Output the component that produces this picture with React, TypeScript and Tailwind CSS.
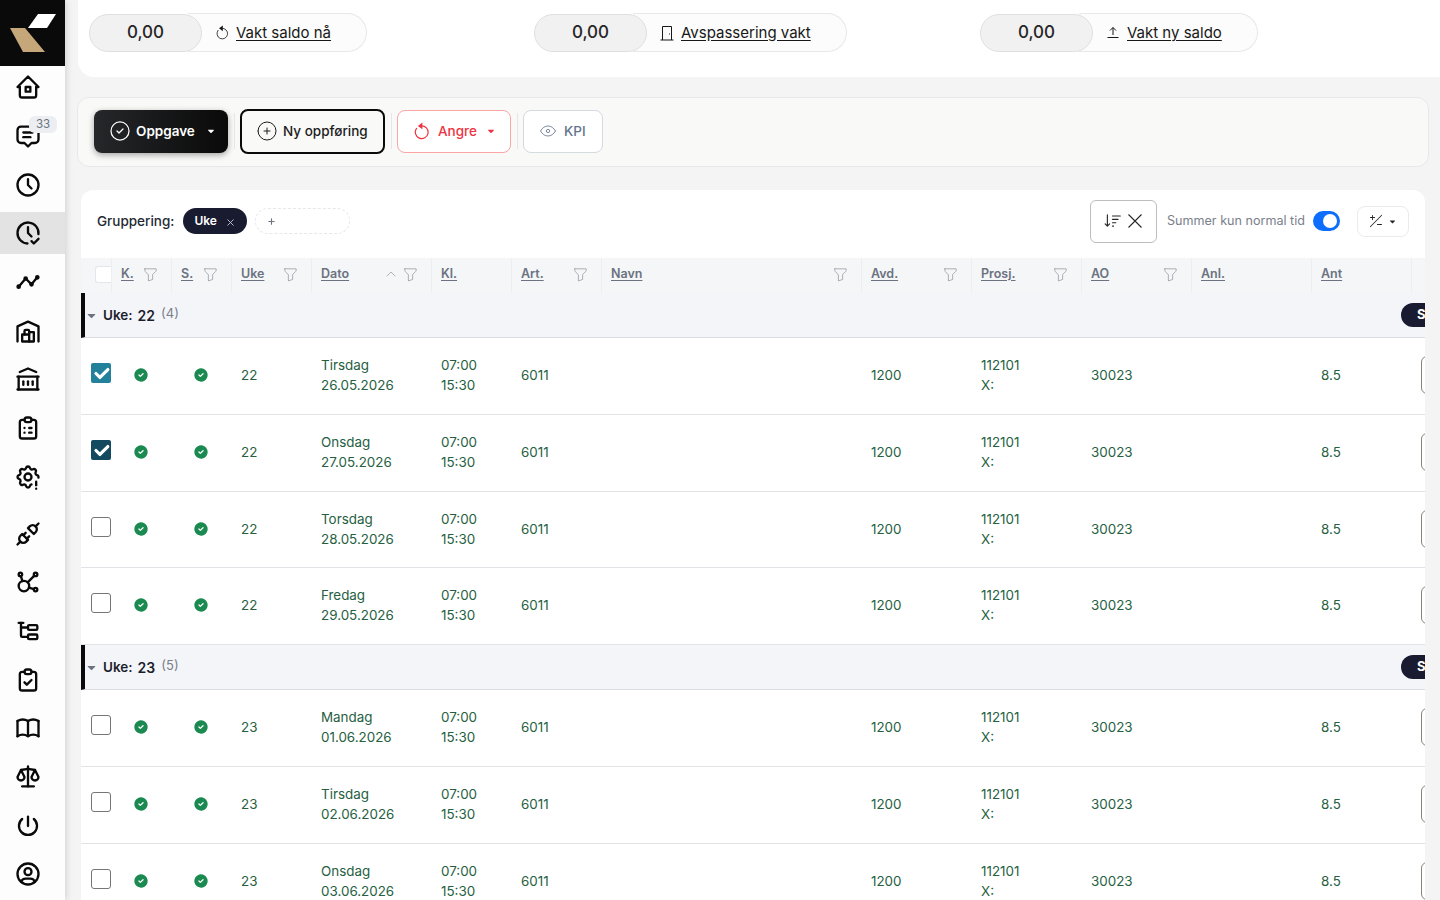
import { useState } from 'react';
import {
  TbHome2,
  TbMessage2,
  TbClock,
  TbClockCheck,
  TbTimeline,
  TbBuildingWarehouse,
  TbBuildingBank,
  TbClipboardList,
  TbSettingsExclamation,
  TbPlugConnected,
  TbAffiliate,
  TbSubtask,
  TbClipboardCheck,
  TbBook,
  TbScale,
  TbPower,
  TbUserCircle,
  TbFilter,
  TbChevronUp,
  TbX,
  TbCheck,
  TbPlus,
  TbCaretDownFilled,
  TbCircleCheck,
  TbCirclePlus,
  TbEye,
  TbCircleCheckFilled,
} from 'react-icons/tb';
import { BsSortDown, BsPlusSlashMinus } from 'react-icons/bs';

const navIcons = [
  { icon: TbHome2 },
  { icon: TbMessage2, badge: '33' },
  { icon: TbClock },
  { icon: TbClockCheck, active: true },
  { icon: TbTimeline },
  { icon: TbBuildingWarehouse },
  { icon: TbBuildingBank },
  { icon: TbClipboardList },
  { icon: TbSettingsExclamation, gapAfter: true },
  { icon: TbPlugConnected },
  { icon: TbAffiliate },
  { icon: TbSubtask },
  { icon: TbClipboardCheck },
  { icon: TbBook },
  { icon: TbScale },
  { icon: TbPower },
  { icon: TbUserCircle },
];

const gridCols = 'grid grid-cols-[30px_60px_60px_80px_120px_80px_90px_260px_110px_110px_110px_120px_100px_100px] w-[1440px]';

const columns = [
  { label: 'K.', filter: true },
  { label: 'S.', filter: true },
  { label: 'Uke', filter: true },
  { label: 'Dato', filter: true, sort: true },
  { label: 'Kl.' },
  { label: 'Art.', filter: true },
  { label: 'Navn', filter: true },
  { label: 'Avd.', filter: true },
  { label: 'Prosj.', filter: true },
  { label: 'AO', filter: true },
  { label: 'Anl.' },
  { label: 'Ant' },
  { label: '' },
];

const groups = [
  {
    week: '22',
    count: 4,
    rows: [
      { day: 'Tirsdag', date: '26.05.2026', checked: 'teal', h: 'h-[77px]' },
      { day: 'Onsdag', date: '27.05.2026', checked: 'navy', h: 'h-[77px]' },
      { day: 'Torsdag', date: '28.05.2026', h: 'h-[76px]' },
      { day: 'Fredag', date: '29.05.2026', h: 'h-[77px]' },
    ],
  },
  {
    week: '23',
    count: 5,
    rows: [
      { day: 'Mandag', date: '01.06.2026', h: 'h-[77px]' },
      { day: 'Tirsdag', date: '02.06.2026', h: 'h-[77px]' },
      { day: 'Onsdag', date: '03.06.2026', h: 'h-[77px]' },
    ],
  },
];

function UndoIcon({ size, width }: { size: number; width: number }) {
  return (
    <svg width={size} height={size} viewBox="0 0 24 24" fill="none" stroke="currentColor" strokeWidth={width} strokeLinecap="round">
      <path d="M11 5.2a8.5 8.5 0 1 1-6.2 3.4" />
      <path d="M12.5 0.8v9L6.5 5.2z" fill="currentColor" stroke="none" />
    </svg>
  );
}

function UploadLine() {
  return (
    <svg width="14" height="14" viewBox="0 0 14 14" fill="none" stroke="currentColor" strokeWidth="1">
      <path d="M7 9V1.5M4 4.5l3-3 3 3M1.5 11.5h11" />
    </svg>
  );
}

function DoorIcon() {
  return (
    <svg width="14" height="16" viewBox="0 0 14 16" fill="none" stroke="currentColor" strokeWidth="1">
      <path d="M2.5 15V1.5h9V15M0.5 15h13" />
      <path d="M9.5 8.5v1" />
    </svg>
  );
}

function Logo() {
  return (
    <div className="relative z-10 h-[66px] shrink-0 bg-[#0a0a0a]">
      <svg width="65" height="66" viewBox="0 0 65 66">
        <polygon points="38,14 56,14 47,28 28,28" fill="#ffffff" />
        <polygon points="10,28 25,28 45,52 23,52" fill="#c6a77a" />
      </svg>
    </div>
  );
}

function Sidebar() {
  return (
    <aside className="z-10 flex h-[900px] w-[65px] shrink-0 flex-col overflow-hidden bg-[#fdfdfd] shadow-[2px_0_6px_rgba(0,0,0,0.12)]">
      <Logo />
      <nav className="-mt-[3px] flex flex-col">
        {navIcons.map((item, i) => (
          <div
            key={i}
            className={`relative flex h-[48.7px] shrink-0 items-center pl-[14px] ${item.gapAfter ? 'mb-[8px]' : ''}`}
          >
            {item.active && <span className="absolute inset-x-0 top-[3px] h-[42px] bg-[#e3e3e3]" />}
            <item.icon className="relative text-[#0a0a0a]" size={28} strokeWidth={2} />
            {item.badge && (
              <span className="absolute left-[29px] top-[4px] rounded-md bg-[#eceef1] px-[7px] text-[11.5px] leading-[17px] text-[#6b7280]">
                {item.badge}
              </span>
            )}
          </div>
        ))}
      </nav>
    </aside>
  );
}

function Saldo({ value, label, icon }: { value: string; label: string; icon: React.ReactNode }) {
  return (
    <div className="flex items-center">
      <div className="z-[1] flex h-[38px] w-[113px] items-center justify-center rounded-full border border-[#e0e0e0] bg-[#f1f1f1] text-[17px] font-medium text-[#262626]">
        {value}
      </div>
      <div className="-ml-[14px] flex h-[39px] items-center gap-[6px] rounded-r-full border border-l-0 border-[#e8e8e8] bg-[#fcfcfc] pl-[26px] pr-[35px] text-[15px] text-[#171717]">
        <span className="flex w-[16px] justify-center">{icon}</span>
        <span className="pt-[1px] underline underline-offset-2">{label}</span>
      </div>
    </div>
  );
}

function Toolbar() {
  const divider = <div className="mx-[5.5px] h-[36px] w-px bg-[#e4e6ea]" />;
  return (
    <div className="ml-[12px] mr-[11px] mt-[20px] flex h-[70px] items-center rounded-xl border border-[#e7e8ea] bg-[#f9f9f8] pb-[2px] pl-[16px]">
      <button className="flex h-[43px] w-[134px] items-center gap-[4px] rounded-lg bg-gradient-to-r from-[#26272a] to-[#0a0a0a] pl-[14px] text-[13.5px] font-semibold text-white shadow-[0_2px_6px_rgba(0,0,0,0.35)]">
        <TbCircleCheck size={24} strokeWidth={1.25} />
        <span>Oppgave</span>
        <TbCaretDownFilled size={10} className="ml-[7px]" />
      </button>
      {divider}
      <button className="flex h-[45px] w-[145px] items-center gap-[4px] rounded-lg border-2 border-[#0a0a0a] pl-[13px] text-[13.5px] font-medium text-[#1c1c1c]">
        <TbCirclePlus size={24} strokeWidth={1} />
        <span>Ny oppføring</span>
      </button>
      {divider}
      <button className="flex h-[43px] w-[114px] items-center gap-[7px] rounded-lg border border-[#fca5a5] bg-white pl-[15px] text-[13.5px] font-medium text-[#ef3340]">
        <UndoIcon size={18} width={1.6} />
        <span>Angre</span>
        <TbCaretDownFilled size={10} className="ml-[2px]" />
      </button>
      {divider}
      <button className="flex h-[43px] w-[80px] items-center gap-[6px] rounded-lg border border-[#d5d9e0] bg-white pl-[14px] text-[13.5px] font-medium text-[#64748b]">
        <TbEye size={20} strokeWidth={1} />
        <span>KPI</span>
      </button>
    </div>
  );
}

function GroupBar() {
  const [on, setOn] = useState(true);
  return (
    <div className="flex h-[68px] items-center pb-[6px] pl-[16px] pr-[16px]">
      <span className="text-[13.5px] font-medium text-[#262a33]">Gruppering:</span>
      <span className="ml-[9px] flex h-[26px] items-center gap-[8px] rounded-full bg-[#191b30] pl-[11px] pr-[11px] text-[12px] font-semibold text-white">
        Uke
        <TbX size={11} className="mt-[2px] text-[#c6c8d0]" />
      </span>
      <span className="ml-[8px] flex h-[26px] w-[95px] items-center rounded-full border border-dashed border-[#e5e7eb] pl-[11px] text-[12px] text-[#6b7280]">
        <TbPlus size={9} strokeWidth={3} />
      </span>
      <div className="ml-auto flex items-center">
        <button className="flex h-[43px] w-[67px] items-center justify-center gap-[5px] rounded-md border border-[#bdbdbd] text-[#262626]">
          <BsSortDown size={18} />
          <svg width="16" height="16" viewBox="0 0 16 16" stroke="currentColor" strokeWidth="1.1">
            <path d="M1.5 1.5l13 13M14.5 1.5l-13 13" />
          </svg>
        </button>
        <span className="ml-[10px] text-[12.6px] text-[#7a808c]">Summer kun normal tid</span>
        <button
          onClick={() => setOn(!on)}
          className="ml-[8px] flex h-[20px] w-[27px] items-center justify-end rounded-full bg-[#0d6efd] pr-[3px]"
        >
          <span className="h-[14px] w-[14px] rounded-full bg-white" />
        </button>
        <button className="ml-[17px] flex h-[31px] w-[52px] items-center justify-center gap-[5px] rounded-lg border border-[#ebebeb] text-[#262626]">
          <BsPlusSlashMinus size={14} />
          <TbCaretDownFilled size={9} />
        </button>
      </div>
    </div>
  );
}

function TableHeader() {
  return (
    <div className={`${gridCols} relative h-[35px] bg-[#f5f6f8] shadow-[0_1px_2px_rgba(0,0,0,0.08)]`}>
      <div className="flex items-center pb-[2px] pl-[14px]">
        <span className="h-[17px] w-[16px] rounded-l-[3px] border border-r-0 border-[#e4e6ea] bg-white" />
      </div>
      {columns.map((c, i) => (
        <div key={i} className="flex items-center border-l border-[#eceef1] pb-[3px] pl-[9px] pr-[12px] text-[12.5px] font-semibold text-[#6b7280]">
          <span className="underline underline-offset-2">{c.label}</span>
          <span className="ml-auto flex items-center gap-[3px] text-[#8b909a]">
            {c.sort && <TbChevronUp size={16} strokeWidth={1} />}
            {c.filter && <TbFilter size={17} strokeWidth={1} />}
          </span>
        </div>
      ))}
    </div>
  );
}

function GroupRow({ week, count }: { week: string; count: number }) {
  return (
    <div className="relative flex h-[45px] items-center border-b border-[#dcdde0] border-l-[4px] border-l-[#0a0a0a] bg-[#f4f5f9] text-[#1c1e2c]">
      <TbCaretDownFilled size={13} className="text-[#6b7280]" />
      <span className="ml-[5px] text-[13.5px] font-semibold">Uke:</span>
      <span className="ml-[5px] text-[14px] font-semibold">{week}</span>
      <span className="mb-[3px] ml-[6px] text-[13px] text-[#7a7f8a]">({count})</span>
      <span className="absolute left-[1316px] top-[10px] flex h-[24px] w-[60px] items-center rounded-full bg-[#191b30] pl-[16px] text-[13px] font-bold text-white">
        S
      </span>
    </div>
  );
}

function Check({ state }: { state?: string }) {
  if (!state) return <span className="block h-[20px] w-[20px] rounded-[3px] border border-[#767676] bg-white" />;
  return (
    <span className={`flex h-[20px] w-[20px] items-center justify-center rounded-[2px] ${state === 'teal' ? 'bg-[#23819b]' : 'bg-[#134a60]'}`}>
      <TbCheck size={19} strokeWidth={4} className="text-white" />
    </span>
  );
}

function DataRow({ row, week }: { row: { day: string; date: string; checked?: string; h: string }; week: string }) {
  const green = 'text-[#25603f]';
  const cell = 'flex flex-col justify-center pb-[2px] pl-[10px] leading-[20px]';
  return (
    <div className={`${gridCols} ${row.h} items-stretch border-b border-[#e2e3e6] bg-white text-[13.4px] ${green}`}>
      <div className="flex items-center pb-[6px] pl-[10px]">
        <Check state={row.checked} />
      </div>
      <div className="flex items-center pb-[2px] pl-[22px]">
        <TbCircleCheckFilled size={16} className="text-[#1a8a50]" />
      </div>
      <div className="flex items-center pb-[2px] pl-[22px]">
        <TbCircleCheckFilled size={16} className="text-[#1a8a50]" />
      </div>
      <div className={cell}>{week}</div>
      <div className={cell}>
        <span>{row.day}</span>
        <span>{row.date}</span>
      </div>
      <div className={cell}>
        <span>07:00</span>
        <span>15:30</span>
      </div>
      <div className={cell}>6011</div>
      <div className={cell} />
      <div className={cell}>1200</div>
      <div className={cell}>
        <span>112101</span>
        <span>X:</span>
      </div>
      <div className={cell}>30023</div>
      <div className={cell} />
      <div className={cell}>8.5</div>
      <div className="flex items-center pb-[2px] pl-[10px]">
        <span className="h-[38px] w-[40px] rounded-md border border-[#8a8378] bg-white" />
      </div>
    </div>
  );
}

export default function App() {
  return (
    <div className="flex h-[900px] w-[1440px] overflow-hidden bg-[#f4f4f4] [font-family:Inter,'Liberation_Sans',sans-serif]">
      <Sidebar />
      <main className="min-w-0 flex-1">
        <header className="ml-[13px] grid h-[77px] grid-cols-[445px_446px_auto] items-start rounded-bl-2xl bg-white pl-[11px] pt-[13px]">
          <Saldo value="0,00" label="Vakt saldo nå" icon={<UndoIcon size={15} width={1.3} />} />
          <Saldo value="0,00" label="Avspassering vakt" icon={<DoorIcon />} />
          <Saldo value="0,00" label="Vakt ny saldo" icon={<UploadLine />} />
        </header>
        <Toolbar />
        <section className="ml-[16px] mr-[15px] mt-[23px] h-[810px] overflow-hidden rounded-tr-xl rounded-tl-xl bg-white">
          <GroupBar />
          <TableHeader />
          {groups.map((g) => (
            <div key={g.week}>
              <GroupRow week={g.week} count={g.count} />
              {g.rows.map((r) => (
                <DataRow key={r.date} row={r} week={g.week} />
              ))}
            </div>
          ))}
        </section>
      </main>
    </div>
  );
}
